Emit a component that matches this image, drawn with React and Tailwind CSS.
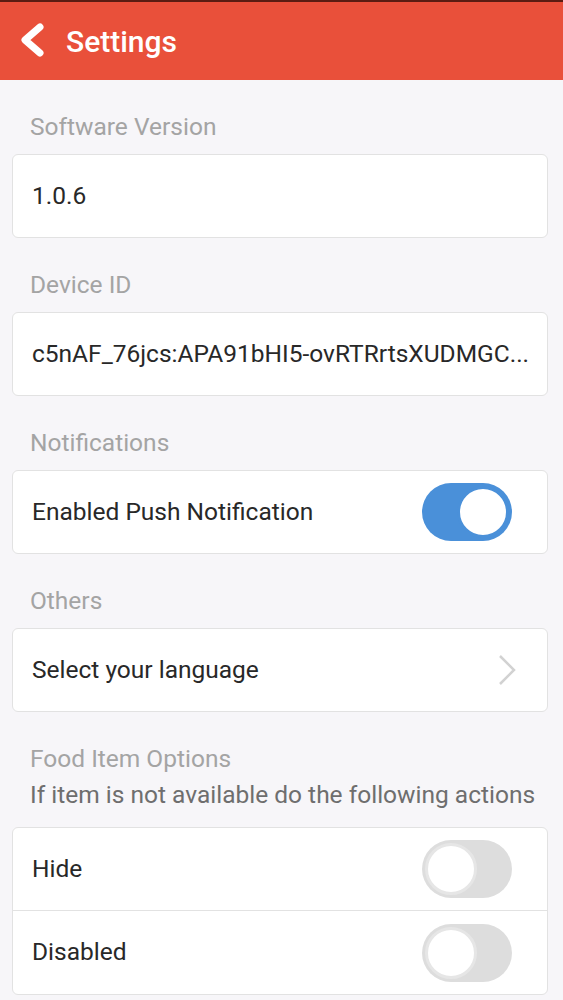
const font = { fontFamily: "Roboto, 'Noto Sans', sans-serif" };

function Toggle({ on }) {
  return (
    <div
      className={`flex items-center w-[90px] h-[58px] rounded-full p-[3px] ${
        on ? "bg-[#4a90d9] justify-end" : "bg-[#dddddd] justify-start"
      }`}
    >
      <div
        className={`w-[52px] h-[52px] rounded-full bg-white border-[3px] ${
          on ? "border-[#4a90d9]" : "border-[#e6e6e6]"
        }`}
      ></div>
    </div>
  );
}

function Label({ children }) {
  return (
    <div className="pl-[30px] pt-[32px] pb-[12px] text-[24.5px] leading-[30px] text-[#a4a4a4]">
      {children}
    </div>
  );
}

function Card({ children }) {
  return (
    <div className="ml-[12px] mr-[15px] bg-white border border-[#e2e2e2] rounded-[6px] overflow-hidden">
      {children}
    </div>
  );
}

function Row({ children, right, border, tall }) {
  return (
    <div
      className={`flex items-center justify-between pl-[19px] pr-[35px] ${
        tall ? "h-[83px]" : "h-[82px]"
      } ${border ? "border-b border-[#e2e2e2]" : ""}`}
    >
      <div className="text-[24.5px] text-[#282828] whitespace-nowrap">{children}</div>
      {right}
    </div>
  );
}

export default function App() {
  return (
    <div className="min-h-[1000px] bg-[#f7f6f9]" style={font}>
      <div className="h-[80px] bg-[#e9503a] border-t-2 border-[#5b1c12] flex items-center pl-[16px]">
        <svg width="30" height="40" viewBox="0 0 30 40" className="-mt-[2px]">
          <polyline
            points="24,7 9,20 24,33"
            fill="none"
            stroke="white"
            strokeWidth="7"
            strokeLinecap="round"
            strokeLinejoin="round"
          />
        </svg>
        <span className="ml-[20px] text-[30px] font-medium text-white">Settings</span>
      </div>

      <Label>Software Version</Label>
      <Card>
        <Row>1.0.6</Row>
      </Card>

      <Label>Device ID</Label>
      <Card>
        <Row>c5nAF_76jcs:APA91bHI5-ovRTRrtsXUDMGC...</Row>
      </Card>

      <Label>Notifications</Label>
      <Card>
        <Row right={<Toggle on />}>Enabled Push Notification</Row>
      </Card>

      <Label>Others</Label>
      <Card>
        <Row
          right={
            <svg width="18" height="32" viewBox="0 0 18 32" className="-mr-[4px]">
              <polyline
                points="2,2 16,16 2,30"
                fill="none"
                stroke="#d2d2d2"
                strokeWidth="2.5"
              />
            </svg>
          }
        >
          Select your language
        </Row>
      </Card>

      <div className="pl-[30px] pt-[32px] pb-[17px]">
        <div className="text-[24.5px] leading-[30px] text-[#a4a4a4]">Food Item Options</div>
        <div className="mt-[6px] text-[24.5px] leading-[30px] text-[#6e6e6e] whitespace-nowrap">
          If item is not available do the following actions
        </div>
      </div>
      <Card>
        <Row tall border right={<Toggle />}>Hide</Row>
        <Row tall right={<Toggle />}>Disabled</Row>
      </Card>
    </div>
  );
}
